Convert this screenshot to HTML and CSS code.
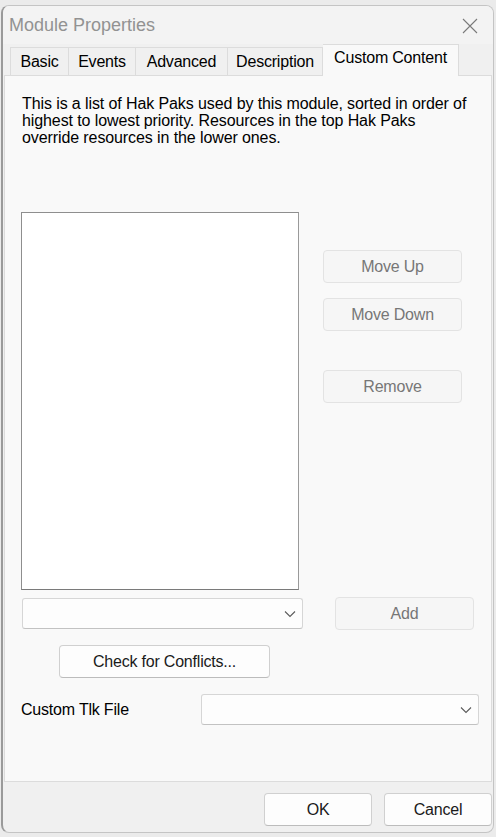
FILE: index.html
```html
<!DOCTYPE html>
<html>
<head>
<meta charset="utf-8">
<link rel="stylesheet" href="styles.css">
</head>
<body>
<div class="window">
  <div class="titlebar">
    <span class="title">Module Properties</span>
    <svg class="close" width="16" height="16" viewBox="0 0 16 16"><path d="M1 1 L15 15 M15 1 L1 15" stroke="#7a7a7a" stroke-width="1.1" fill="none"/></svg>
  </div>
  <div class="tabs">
    <div class="tab t-basic">Basic</div>
    <div class="tab t-events">Events</div>
    <div class="tab t-adv">Advanced</div>
    <div class="tab t-desc">Description</div>
    <div class="tab active">Custom Content</div>
  </div>
  <div class="panel">
    <p class="desc">This is a list of Hak Paks used by this module, sorted in order of highest to lowest priority. Resources in the top Hak Paks override resources in the lower ones.</p>
    <div class="main-row">
      <div class="listbox"></div>
      <div class="side">
        <div class="btn disabled b-up">Move Up</div>
        <div class="btn disabled b-down">Move Down</div>
        <div class="btn disabled b-remove">Remove</div>
      </div>
    </div>
    <div class="add-row">
      <div class="combo c-hak">
        <svg class="chev" width="12" height="8" viewBox="0 0 12 8"><path d="M1 1.5 L6 6.5 L11 1.5" stroke="#5a5a5a" stroke-width="1.1" fill="none"/></svg>
      </div>
      <div class="btn disabled b-add">Add</div>
    </div>
    <div class="btn b-check">Check for Conflicts...</div>
    <div class="tlk-row">
      <span class="label">Custom Tlk File</span>
      <div class="combo c-tlk">
        <svg class="chev" width="12" height="8" viewBox="0 0 12 8"><path d="M1 1.5 L6 6.5 L11 1.5" stroke="#5a5a5a" stroke-width="1.1" fill="none"/></svg>
      </div>
    </div>
  </div>
  <div class="footer">
    <div class="btn b-ok">OK</div>
    <div class="btn b-cancel">Cancel</div>
  </div>
</div>
</body>
</html>
```

FILE: styles.css
```css
html, body {
  margin: 0;
  padding: 0;
}
body {
  width: 496px;
  height: 837px;
  background: #ebebeb;
  font-family: "Liberation Sans", Arial, sans-serif;
  font-size: 16px;
  color: #000;
  overflow: hidden;
  padding-top: 5px;
  padding-left: 1px;
  box-sizing: border-box;
}
.window {
  width: 493px;
  height: 828px;
  box-sizing: border-box;
  background: #f0f0f0;
  border: 1px solid #c4c4c4;
  border-left: 2px solid #9a9a9a;
  border-radius: 8px;
  display: flex;
  flex-direction: column;
  overflow: hidden;
}
.titlebar {
  height: 38px;
  flex: none;
  background: #f3f3f3;
  display: flex;
  align-items: center;
  justify-content: space-between;
  padding: 0 15px 0 6px;
}
.title {
  font-size: 18px;
  color: #929292;
  margin-top: 1px;
}
.close {
  margin-top: 1px;
}
.tabs {
  height: 31px;
  flex: none;
  display: flex;
  align-items: flex-end;
  padding-left: 7px;
}
.tab {
  height: 28px;
  box-sizing: border-box;
  border: 1px solid #dcdcdc;
  border-bottom: none;
  border-right: none;
  display: flex;
  align-items: center;
  justify-content: center;
  font-size: 16px;
  letter-spacing: -0.2px;
  background: #f0f0f0;
  padding-top: 1px;
}
.t-basic { width: 58px; }
.t-events { width: 67px; }
.t-adv { width: 92px; }
.t-desc { width: 96px; border-right: 1px solid #dcdcdc; }
.tab.active {
  width: 136px;
  height: 32px;
  margin-bottom: -1px;
  background: #f9f9f9;
  border: 1px solid #dcdcdc;
  border-bottom: none;
  border-left: none;
  align-items: flex-start;
  padding-top: 4px;
  position: relative;
  z-index: 1;
}
.panel {
  flex: none;
  height: 707px;
  box-sizing: border-box;
  margin: 0 1px 0 1px;
  background: #f9f9f9;
  border: 1px solid #dcdcdc;
  padding: 19px 0 0 17px;
}
.desc {
  margin: 0;
  width: 450px;
  line-height: 17px;
  font-size: 16px;
  letter-spacing: -0.1px;
}
.main-row {
  display: flex;
  margin-top: 66px;
}
.listbox {
  width: 278px;
  height: 378px;
  box-sizing: border-box;
  background: #fff;
  border: 1px solid #8a8a8a;
  border-color: #8e8e8e #9a9a9a #7a7a7a #8e8e8e;
  margin-left: -1px;
}
.side {
  margin-left: 24px;
  padding-top: 38px;
  display: flex;
  flex-direction: column;
}
.btn {
  box-sizing: border-box;
  height: 33px;
  border: 1px solid #d0d0d0;
  border-bottom-color: #bcbcbc;
  border-radius: 4px;
  background: #fdfdfd;
  display: flex;
  align-items: center;
  justify-content: center;
  font-size: 16px;
  letter-spacing: -0.2px;
  color: #1a1a1a;
}
.btn.disabled {
  background: #f6f6f6;
  border: 1px solid #e3e3e3;
  color: #777;
}
.b-up, .b-down, .b-remove { width: 139px; }
.b-down { margin-top: 15px; }
.b-remove { margin-top: 39px; }
.add-row {
  display: flex;
  align-items: flex-start;
  margin-top: 7px;
}
.combo {
  box-sizing: border-box;
  height: 31px;
  background: #fdfdfd;
  border: 1px solid #d6d6d6;
  border-bottom-color: #c2c2c2;
  border-radius: 3px;
  display: flex;
  align-items: center;
  justify-content: flex-end;
  padding-right: 6px;
}
.c-hak {
  width: 281px;
  margin-top: 1px;
}
.b-add {
  width: 139px;
  margin-left: 32px;
}
.b-check {
  width: 211px;
  margin-top: 15px;
  margin-left: 37px;
}
.tlk-row {
  display: flex;
  align-items: center;
  margin-top: 16px;
  margin-left: -1px;
}
.label {
  width: 180px;
  font-size: 16px;
  letter-spacing: -0.2px;
}
.c-tlk {
  width: 278px;
}
.footer {
  flex: 1;
  display: flex;
  justify-content: flex-end;
  align-items: flex-start;
  padding: 11px 1px 0 0;
  gap: 12px;
}
.b-ok, .b-cancel {
  width: 108px;
  height: 33px;
}
```
